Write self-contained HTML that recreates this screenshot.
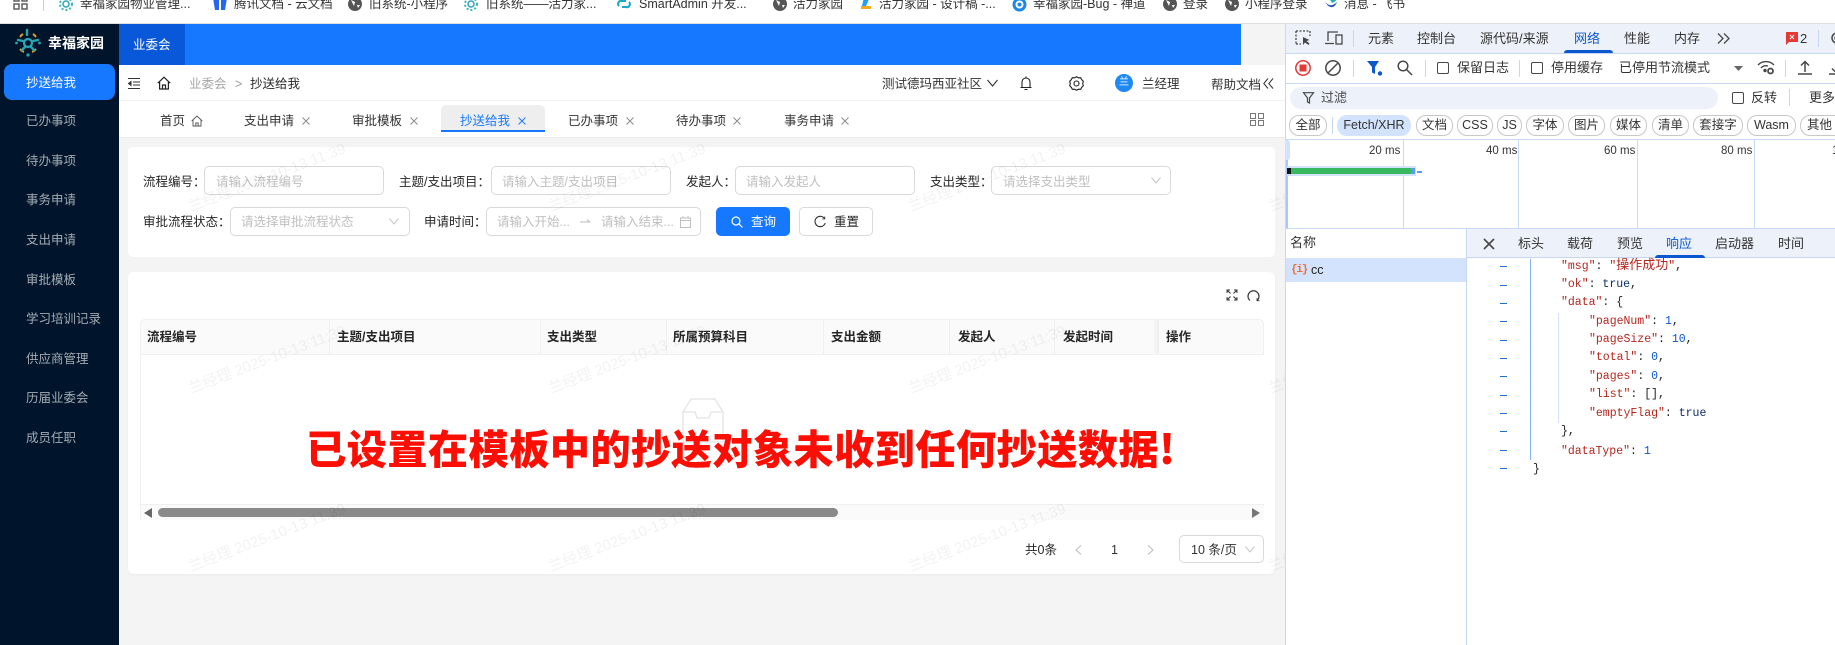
<!DOCTYPE html>
<html lang="zh-CN"><head><meta charset="utf-8"><title>抄送给我</title>
<style>
*{box-sizing:border-box}
html,body{margin:0;padding:0;width:1835px;height:645px;overflow:hidden;background:#fff;font-family:"Liberation Sans","Noto Sans CJK SC",sans-serif;font-size:12.5px;color:#262626}
.a{position:absolute}
.t{position:absolute;white-space:nowrap;line-height:20px;font-size:12.5px}
svg{position:absolute;overflow:visible}
.nav{color:#a3abb3;left:26px}
.tab{color:#333}
.lab{color:#262626}
.inp{position:absolute;background:#fff;border:1px solid #d9d9d9;border-radius:5px;height:29px}
.ph{color:#bfbfbf}
.th{font-weight:700;color:#262626;top:327px;font-size:12.5px}
.col{position:absolute;top:320px;height:34px;width:1px;background:#f0f0f0}
.dt{color:#333;font-size:13px}
.chip{position:absolute;top:115px;height:21px;border:1px solid #c8c8c8;border-radius:10px;text-align:center;line-height:19px;font-size:12.5px;color:#333;background:#fff}
.wm{position:absolute;white-space:nowrap;font-size:15px;line-height:20px;height:20px;color:rgba(0,0,0,.05);transform-origin:0 100%;transform:rotate(-20.7deg)}
.j{position:absolute;white-space:pre;font-family:"Liberation Mono","Noto Sans CJK SC",monospace;font-size:11.5px;line-height:18px;color:#222}
.j .c{font-size:13px}
.k{color:#b3261e}.n{color:#0b57d0}.b{color:#0d2f6e}
.g{position:absolute;left:1500px;width:7px;height:1px;background:#1a6fd6}
.bk{position:absolute;top:-6px;color:#333;white-space:nowrap;line-height:20px;font-size:12.5px}
.tl{position:absolute;top:140px;width:1px;height:88px;background:#c9daf8}
.ms{position:absolute;top:141px;white-space:nowrap;line-height:20px;font-size:11.5px;color:#333}
</style></head><body>

<!-- bookmarks bar -->
<div class="a" style="left:0;top:0;width:1835px;height:24px;background:#fff;border-bottom:1px solid #dcdcdc;overflow:hidden">
<svg style="left:13px;top:-5px" width="15" height="16" fill="none" stroke="#555" stroke-width="1.4"><rect x="1" y="1" width="5" height="5"/><rect x="9" y="1" width="5" height="5"/><rect x="1" y="9" width="5" height="5"/><rect x="9" y="9" width="5" height="5"/></svg>
<div class="a" style="left:43px;top:0;width:1px;height:11px;background:#ccd"></div>
<svg style="left:59px;top:-3px" width="14" height="14"><circle cx="7" cy="7" r="3" fill="none" stroke="#2aa7b5" stroke-width="1.5"/><circle cx="7" cy="7" r="6" fill="none" stroke="#3fb3b8" stroke-width="2" stroke-dasharray="2 2"/></svg><span class="bk" style="left:80px">幸福家园物业管理...</span>
<svg style="left:212px;top:-3px" width="16" height="14"><path d="M1 1h6v12H3zM9 1h6l-2 12H9z" fill="#2468f2"/></svg><span class="bk" style="left:234px">腾讯文档 - 云文档</span>
<svg style="left:348px;top:-3px" width="14" height="14"><circle cx="7" cy="7" r="7" fill="#555"/><path d="M3 3l4 2-1 4zM9 8l3 0-2 3z" fill="#fff"/></svg><span class="bk" style="left:369px">旧系统-小程序</span>
<svg style="left:464px;top:-3px" width="14" height="14"><circle cx="7" cy="7" r="3" fill="none" stroke="#2aa7b5" stroke-width="1.5"/><circle cx="7" cy="7" r="6" fill="none" stroke="#3fb3b8" stroke-width="2" stroke-dasharray="2 2"/></svg><span class="bk" style="left:486px">旧系统——活力家...</span>
<svg style="left:617px;top:-3px" width="14" height="14" fill="none" stroke="#1ea7c5" stroke-width="2"><path d="M2 9a3 3 0 0 1 3-5h4M12 5a3 3 0 0 1-3 5H5"/></svg><span class="bk" style="left:639px">SmartAdmin 开发...</span>
<svg style="left:773px;top:-3px" width="14" height="14"><circle cx="7" cy="7" r="7" fill="#555"/><path d="M3 3l4 2-1 4zM9 8l3 0-2 3z" fill="#fff"/></svg><span class="bk" style="left:793px">活力家园</span>
<svg style="left:859px;top:-3px" width="14" height="14"><path d="M2 9h10v3H2z" fill="#f5a623"/><path d="M5 0h6L7 9H3z" fill="#1ea0f2"/></svg><span class="bk" style="left:879px">活力家园 - 设计稿 -...</span>
<svg style="left:1012px;top:-3px" width="15" height="15"><circle cx="7.5" cy="7.5" r="7" fill="#1e88e5"/><circle cx="7.5" cy="7.5" r="3" fill="none" stroke="#fff" stroke-width="2"/></svg><span class="bk" style="left:1033px">幸福家园-Bug - 禅道</span>
<svg style="left:1163px;top:-3px" width="14" height="14"><circle cx="7" cy="7" r="7" fill="#555"/><path d="M3 3l4 2-1 4zM9 8l3 0-2 3z" fill="#fff"/></svg><span class="bk" style="left:1183px">登录</span>
<svg style="left:1225px;top:-3px" width="14" height="14"><circle cx="7" cy="7" r="7" fill="#555"/><path d="M3 3l4 2-1 4zM9 8l3 0-2 3z" fill="#fff"/></svg><span class="bk" style="left:1245px">小程序登录</span>
<svg style="left:1324px;top:-4px" width="14" height="14"><path d="M1 5c3 5 7 6 12 1-2 6-8 8-12-1z" fill="#1f4fb5"/><path d="M4 0h6l2 5-4 2z" fill="#1fb6a8"/></svg><span class="bk" style="left:1344px">消息 - 飞书</span>
</div>

<!-- main background -->
<div class="a" style="left:119px;top:24px;width:1166px;height:621px;background:#f4f4f4"></div>

<!-- sidebar -->
<div class="a" style="left:0;top:24px;width:119px;height:621px;background:#00152b"></div>
<svg style="left:14px;top:29px" width="28" height="28" fill="none">
<circle cx="14" cy="14" r="4" stroke="#2aa7b5" stroke-width="2.2"/>
<path d="M6 8a9 9 0 0 1 3-3M22 8a9 9 0 0 0-3-3" stroke="#e0a030" stroke-width="2"/>
<path d="M6 20a9 9 0 0 0 4 3M22 20a9 9 0 0 1-4 3" stroke="#e0a030" stroke-width="2"/>
<path d="M13 1v5M4 11l5 1M24 11l-5 1M8 21l3-3M20 21l-3-3" stroke="#24a6b3" stroke-width="2.4" stroke-linecap="round"/>
<circle cx="2.5" cy="14" r="1.4" fill="#24a6b3"/><circle cx="25.5" cy="14" r="1.4" fill="#24a6b3"/><circle cx="14" cy="26" r="1.6" fill="#24a6b3"/>
</svg>
<span class="t" style="left:48px;top:33px;color:#fff;font-weight:700;font-size:14px">幸福家园</span>
<div class="a" style="left:4px;top:64px;width:111px;height:36px;background:#1677ff;border-radius:8px"></div>
<span class="t" style="left:26px;top:73px;color:#fff">抄送给我</span>
<span class="t nav" style="top:111px">已办事项</span>
<span class="t nav" style="top:151px">待办事项</span>
<span class="t nav" style="top:190px">事务申请</span>
<span class="t nav" style="top:230px">支出申请</span>
<span class="t nav" style="top:270px">审批模板</span>
<span class="t nav" style="top:309px">学习培训记录</span>
<span class="t nav" style="top:349px">供应商管理</span>
<span class="t nav" style="top:388px">历届业委会</span>
<span class="t nav" style="top:428px">成员任职</span>

<!-- top blue bar -->
<div class="a" style="left:119px;top:24px;width:1122px;height:41px;background:#1677ff"></div>
<div class="a" style="left:119px;top:24px;width:66px;height:41px;background:#0958d9"></div>
<span class="t" style="left:133px;top:35px;color:#fff">业委会</span>

<!-- header row -->
<div class="a" style="left:119px;top:65px;width:1166px;height:36px;background:#fff;border-bottom:1px solid #f0f0f0"></div>
<svg style="left:128px;top:78px" width="13" height="11" fill="none" stroke="#333" stroke-width="1"><path d="M0 .5h12M5 4h7M5 7h7M0 10.5h12"/><path d="M3 3.5L.5 5.5 3 7.5z" fill="#333"/></svg>
<svg style="left:157px;top:76px" width="14" height="14" fill="none" stroke="#222" stroke-width="1.2"><path d="M.8 7.2L7 1.2l6.2 6M2.6 6v7h8.8V6M5.5 13V9h3v4"/></svg>
<span class="t" style="left:189px;top:74px;color:#a6a6a6">业委会</span>
<span class="t" style="left:235px;top:74px;color:#999">&gt;</span>
<span class="t" style="left:250px;top:74px;color:#262626">抄送给我</span>
<span class="t" style="left:882px;top:74px;color:#333">测试德玛西亚社区</span>
<svg style="left:987px;top:79px" width="11" height="8" fill="none" stroke="#333" stroke-width="1.1"><path d="M.5 1l5 6 5-6"/></svg>
<svg style="left:1020px;top:76px" width="12" height="15" fill="none" stroke="#222" stroke-width="1.1"><path d="M2 11V6a4 4 0 0 1 8 0v5M.5 11.5h11M6 .5v1.5M4.5 13.5h3"/></svg>
<svg style="left:1069px;top:76px" width="15" height="15" fill="none" stroke="#222" stroke-width="1.1"><path d="M7.5.8l2 1 2.2-.1 1 2 1.6 1.6-.6 2.2.6 2.2-1.6 1.6-1 2-2.2-.1-2 1-2-1-2.2.1-1-2L.7 9.7l.6-2.2-.6-2.2 1.6-1.6 1-2 2.200.1z"/><circle cx="7.500" cy="7.500" r="2.500"/></svg>
<div class="a" style="left:1115px;top:74px;width:18px;height:18px;border-radius:50%;background:#1e88f5;color:#fff;font-size:10px;line-height:18px;text-align:center">兰</div>
<span class="t" style="left:1142px;top:74px;color:#333">兰经理</span>
<span class="t" style="left:1211px;top:75px;color:#333">帮助文档</span>
<svg style="left:1263px;top:78px" width="11" height="11" fill="none" stroke="#333" stroke-width="1"><path d="M5 .5L.8 5.500 5 10.500M10 .5L5.800 5.500 10 10.500"/></svg>

<!-- tabs row -->
<div class="a" style="left:119px;top:101px;width:1166px;height:37px;background:#fff;border-bottom:1px solid #ebebeb"></div>
<div class="a" style="left:441px;top:105px;width:104px;height:27px;background:#eeeeee;border-radius:5px 5px 0 0;border-bottom:2px solid #1677ff"></div>
<span class="t tab" style="left:160px;top:111px">首页</span>
<svg style="left:191px;top:115px" width="12" height="12" fill="none" stroke="#555" stroke-width=".9"><path d="M.7 6L6 1l5.300 5M2 5v6h8V5M4.800 11V8h2.400v3"/></svg>
<span class="t tab" style="left:244px;top:111px">支出申请</span>
<svg style="left:302px;top:117px" width="8" height="8" stroke="#888" stroke-width=".9"><path d="M.5.5l7 7M7.500.5l-7 7"/></svg>
<span class="t tab" style="left:352px;top:111px">审批模板</span>
<svg style="left:410px;top:117px" width="8" height="8" stroke="#888" stroke-width=".9"><path d="M.5.5l7 7M7.500.5l-7 7"/></svg>
<span class="t" style="left:460px;top:111px;color:#1677ff">抄送给我</span>
<svg style="left:518px;top:117px" width="8" height="8" stroke="#1677ff" stroke-width=".9"><path d="M.5.5l7 7M7.500.5l-7 7"/></svg>
<span class="t tab" style="left:568px;top:111px">已办事项</span>
<svg style="left:626px;top:117px" width="8" height="8" stroke="#888" stroke-width=".9"><path d="M.5.5l7 7M7.500.5l-7 7"/></svg>
<span class="t tab" style="left:676px;top:111px">待办事项</span>
<svg style="left:733px;top:117px" width="8" height="8" stroke="#888" stroke-width=".9"><path d="M.5.5l7 7M7.500.5l-7 7"/></svg>
<span class="t tab" style="left:784px;top:111px">事务申请</span>
<svg style="left:841px;top:117px" width="8" height="8" stroke="#888" stroke-width=".9"><path d="M.5.5l7 7M7.500.5l-7 7"/></svg>
<svg style="left:1250px;top:113px" width="14" height="13" fill="none" stroke="#777" stroke-width="1"><rect x=".5" y=".5" width="5" height="5"/><rect x="8.500" y=".5" width="5" height="5"/><rect x=".5" y="7.500" width="5" height="5"/><rect x="8.500" y="7.500" width="5" height="5"/></svg>

<!-- filter card -->
<div class="a" style="left:128px;top:147px;width:1147px;height:110px;background:#fff;border-radius:5px"></div>
<span class="t lab" style="left:143px;top:172px">流程编号：</span>
<div class="inp" style="left:204px;top:166px;width:180px"></div><span class="t ph" style="left:216px;top:172px">请输入流程编号</span>
<span class="t lab" style="left:399px;top:172px">主题/支出项目：</span>
<div class="inp" style="left:491px;top:166px;width:180px"></div><span class="t ph" style="left:502px;top:172px">请输入主题/支出项目</span>
<span class="t lab" style="left:686px;top:172px">发起人：</span>
<div class="inp" style="left:735px;top:166px;width:180px"></div><span class="t ph" style="left:746px;top:172px">请输入发起人</span>
<span class="t lab" style="left:930px;top:172px">支出类型：</span>
<div class="inp" style="left:991px;top:166px;width:180px"></div><span class="t ph" style="left:1003px;top:172px">请选择支出类型</span>
<svg style="left:1151px;top:177px" width="10" height="7" fill="none" stroke="#c4c4c4"><path d="M.5.5L5 6 9.500.5"/></svg>
<span class="t lab" style="left:143px;top:212px">审批流程状态：</span>
<div class="inp" style="left:230px;top:207px;width:180px"></div><span class="t ph" style="left:241px;top:212px">请选择审批流程状态</span>
<svg style="left:389px;top:218px" width="10" height="7" fill="none" stroke="#c4c4c4"><path d="M.5.5L5 6 9.500.5"/></svg>
<span class="t lab" style="left:424px;top:212px">申请时间：</span>
<div class="inp" style="left:486px;top:207px;width:215px"></div>
<span class="t ph" style="left:497px;top:212px">请输入开始...</span>
<svg style="left:580px;top:219px" width="11" height="6" fill="none" stroke="#bbb"><path d="M0 3h10M7 .5L10 3"/></svg>
<span class="t ph" style="left:601px;top:212px">请输入结束...</span>
<svg style="left:680px;top:216px" width="11" height="12" fill="none" stroke="#bfbfbf"><rect x=".5" y="2" width="10" height="9.500"/><path d="M.5 4.500h10M3 0v2M8 0v2"/></svg>
<div class="a" style="left:716px;top:207px;width:74px;height:29px;background:#1677ff;border-radius:5px"></div>
<svg style="left:731px;top:216px" width="12" height="12" fill="none" stroke="#fff" stroke-width="1.200"><circle cx="5" cy="5" r="4"/><path d="M8 8l3.500 3.500"/></svg>
<span class="t" style="left:751px;top:212px;color:#fff">查询</span>
<div class="a" style="left:799px;top:207px;width:74px;height:29px;background:#fff;border:1px solid #d9d9d9;border-radius:5px"></div>
<svg style="left:814px;top:216px" width="12" height="12" fill="none" stroke="#333" stroke-width="1.100"><path d="M10.500 2.500A5.200 5.200 0 1 0 11.200 7"/><path d="M10.800 .5v2.500H8.300" stroke-width=".8"/></svg>
<span class="t" style="left:834px;top:212px;color:#262626">重置</span>

<!-- table card -->
<div class="a" style="left:128px;top:272px;width:1147px;height:302px;background:#fff;border-radius:6px;box-shadow:0 1px 2px rgba(0,0,0,.04)"></div>
<svg style="left:1226px;top:289px" width="12" height="12" fill="none" stroke="#333" stroke-width="1"><path d="M1 4V1h3M8 1h3v3M11 8v3H8M4 11H1V8M1.500 1.500l3 3M10.500 1.500l-3 3M10.500 10.500l-3-3M1.500 10.500l3-3"/></svg>
<svg style="left:1247px;top:289px" width="13" height="13" fill="none" stroke="#333" stroke-width="1.200"><path d="M3 11.500A5.500 5.500 0 1 1 10 11.500"/><path d="M10 9v2.700h2.500" stroke-width=".8"/></svg>
<div class="a" style="left:140px;top:319px;width:1124px;height:36px;background:#fafafa;border:1px solid #f0f0f0;border-radius:5px 5px 0 0"></div>
<i class="col" style="left:329px"></i><i class="col" style="left:540px"></i><i class="col" style="left:666px"></i><i class="col" style="left:823px"></i><i class="col" style="left:949px"></i><i class="col" style="left:1054px"></i>
<div class="a" style="left:1153px;top:320px;width:6px;height:34px;background:linear-gradient(90deg,rgba(0,0,0,0),rgba(0,0,0,.05))"></div>
<span class="t th" style="left:147px">流程编号</span>
<span class="t th" style="left:337px">主题/支出项目</span>
<span class="t th" style="left:547px">支出类型</span>
<span class="t th" style="left:673px">所属预算科目</span>
<span class="t th" style="left:831px">支出金额</span>
<span class="t th" style="left:958px">发起人</span>
<span class="t th" style="left:1063px">发起时间</span>
<span class="t th" style="left:1166px">操作</span>
<div class="a" style="left:140px;top:355px;width:1px;height:165px;background:#f0f0f0"></div>
<svg style="left:682px;top:398px" width="42" height="50" fill="none" stroke="#e4e4e4" stroke-width="1.300"><path d="M1 14L9 1h24l8 13v30H1zM1 14h12l2 6h12l2-6h12"/></svg>
<div class="a" style="left:141px;top:504px;width:1123px;height:16px;background:#fafafa;border-top:1px solid #f0f0f0"></div>
<svg style="left:144px;top:508px" width="8" height="10"><path d="M8 0v10L0 5z" fill="#666"/></svg>
<div class="a" style="left:158px;top:508px;width:680px;height:9px;background:#8a8a8a;border-radius:5px"></div>
<svg style="left:1252px;top:508px" width="8" height="10"><path d="M0 0v10l8-5z" fill="#777"/></svg>
<span class="t" style="left:1025px;top:540px;color:#262626">共0条</span>
<svg style="left:1075px;top:545px" width="7" height="10" fill="none" stroke="#bbb"><path d="M6 .5L1 5l5 4.500"/></svg>
<span class="t" style="left:1111px;top:540px;color:#333">1</span>
<svg style="left:1147px;top:545px" width="7" height="10" fill="none" stroke="#bbb"><path d="M1 .5L6 5 1 9.500"/></svg>
<div class="inp" style="left:1179px;top:535px;width:85px;height:28px"></div>
<span class="t" style="left:1191px;top:540px;color:#333">10 条/页</span>
<svg style="left:1245px;top:546px" width="10" height="7" fill="none" stroke="#c4c4c4"><path d="M.5.5L5 6 9.500.5"/></svg>

<!-- watermarks -->
<div class="a" style="left:119px;top:65px;width:1166px;height:580px;overflow:hidden;pointer-events:none">
<div class="wm" style="left:74px;top:132px">兰经理 2025-10-13 11:39</div>
<div class="wm" style="left:434px;top:132px">兰经理 2025-10-13 11:39</div>
<div class="wm" style="left:794px;top:132px">兰经理 2025-10-13 11:39</div>
<div class="wm" style="left:1154px;top:132px">兰经理 2025-10-13 11:39</div>
<div class="wm" style="left:74px;top:314px">兰经理 2025-10-13 11:39</div>
<div class="wm" style="left:434px;top:314px">兰经理 2025-10-13 11:39</div>
<div class="wm" style="left:794px;top:314px">兰经理 2025-10-13 11:39</div>
<div class="wm" style="left:1154px;top:314px">兰经理 2025-10-13 11:39</div>
<div class="wm" style="left:74px;top:492px">兰经理 2025-10-13 11:39</div>
<div class="wm" style="left:434px;top:492px">兰经理 2025-10-13 11:39</div>
<div class="wm" style="left:794px;top:492px">兰经理 2025-10-13 11:39</div>
<div class="wm" style="left:1154px;top:492px">兰经理 2025-10-13 11:39</div>
</div>

<!-- big red text -->
<div class="a" style="left:306px;top:417px;white-space:nowrap;font-size:40.3px;letter-spacing:.32px;line-height:60px;font-weight:900;color:#fb0f05;font-family:'Noto Sans CJK SC',sans-serif">已设置在模板中的抄送对象未收到任何抄送数据!</div>

<!-- devtools -->
<div class="a" style="left:1285px;top:24px;width:550px;height:621px;background:#fff;border-left:1px solid #c9d7f2"></div>
<div class="a" style="left:1286px;top:24px;width:549px;height:30px;background:#edf2fa;border-bottom:1px solid #c7d7f0"></div>
<svg style="left:1295px;top:30px" width="17" height="16" fill="none" stroke="#474747" stroke-width="1.300"><path d="M1 1h14M1 1v13M1 14h5M15 1v5" stroke-dasharray="2 1.500"/><path d="M8 7v8l2-2.500 3.500 2.500 1-1.500-3-2.500 3-1z" fill="#474747" stroke="none"/></svg>
<svg style="left:1325px;top:31px" width="18" height="14" fill="none" stroke="#474747" stroke-width="1.300"><path d="M3 10V1h10M0 12.500h9"/><rect x="11" y="4" width="6" height="9"/></svg>
<div class="a" style="left:1353px;top:30px;width:1px;height:17px;background:#c7d7f0"></div>
<span class="t dt" style="left:1368px;top:29px">元素</span>
<span class="t dt" style="left:1417px;top:29px">控制台</span>
<span class="t dt" style="left:1480px;top:29px">源代码/来源</span>
<span class="t dt" style="left:1574px;top:29px;color:#0b57d0">网络</span>
<div class="a" style="left:1564px;top:50px;width:49px;height:3px;background:#0b57d0;border-radius:3px 3px 0 0"></div>
<span class="t dt" style="left:1624px;top:29px">性能</span>
<span class="t dt" style="left:1674px;top:29px">内存</span>
<svg style="left:1717px;top:33px" width="13" height="11" fill="none" stroke="#474747" stroke-width="1.300"><path d="M1 .5l5 5-5 5M7 .5l5 5-5 5"/></svg>
<svg style="left:1786px;top:32px" width="12" height="13"><path d="M0 0h12v10H3l-3 3z" fill="#e53935"/><path d="M4 3l4 4M8 3L4 7" stroke="#fff" stroke-width="1"/></svg>
<span class="t dt" style="left:1800px;top:29px">2</span>
<div class="a" style="left:1818px;top:30px;width:1px;height:17px;background:#c7d7f0"></div>
<svg style="left:1830px;top:31px" width="14" height="14" fill="none" stroke="#474747" stroke-width="1.500"><circle cx="7" cy="7" r="5"/><circle cx="7" cy="7" r="2"/></svg>

<div class="a" style="left:1286px;top:83px;width:549px;height:1px;background:#c7d7f0"></div>
<svg style="left:1295px;top:60px" width="16" height="16"><circle cx="8" cy="8" r="7.200" fill="none" stroke="#e53935" stroke-width="1.500"/><rect x="4.500" y="4.500" width="7" height="7" fill="#e53935"/></svg>
<svg style="left:1325px;top:60px" width="16" height="16" fill="none" stroke="#474747" stroke-width="1.500"><circle cx="8" cy="8" r="7.200"/><path d="M3 13L13 3"/></svg>
<div class="a" style="left:1353px;top:60px;width:1px;height:17px;background:#c7d7f0"></div>
<svg style="left:1367px;top:60px" width="16" height="16"><path d="M0 1h12L8 7v7L5 12.500V7z" fill="#0b57d0"/><circle cx="13" cy="13.500" r="2.200" fill="#0b57d0"/></svg>
<svg style="left:1397px;top:60px" width="16" height="16" fill="none" stroke="#474747" stroke-width="1.500"><circle cx="6" cy="6" r="4.800"/><path d="M9.500 9.500l5.500 5.500"/></svg>
<div class="a" style="left:1425px;top:60px;width:1px;height:17px;background:#c7d7f0"></div>
<div class="a" style="left:1437px;top:62px;width:12px;height:12px;border:1px solid #474747;border-radius:2px"></div>
<span class="t dt" style="left:1457px;top:58px">保留日志</span>
<div class="a" style="left:1519px;top:60px;width:1px;height:17px;background:#c7d7f0"></div>
<div class="a" style="left:1531px;top:62px;width:12px;height:12px;border:1px solid #474747;border-radius:2px"></div>
<span class="t dt" style="left:1551px;top:58px">停用缓存</span>
<span class="t dt" style="left:1619px;top:58px">已停用节流模式</span>
<svg style="left:1734px;top:66px" width="9" height="5"><path d="M0 0h9L4.500 5z" fill="#666"/></svg>
<svg style="left:1757px;top:60px" width="18" height="15" fill="none" stroke="#474747" stroke-width="1.400"><path d="M1 5a11 11 0 0 1 16 0M4 8a7 7 0 0 1 7-2"/><circle cx="8" cy="10.500" r="1" fill="#474747"/><circle cx="13.500" cy="11" r="2.500" stroke-width="1.800"/></svg>
<div class="a" style="left:1785px;top:60px;width:1px;height:17px;background:#c7d7f0"></div>
<svg style="left:1798px;top:60px" width="14" height="15" fill="none" stroke="#474747" stroke-width="1.500"><path d="M7 12V2M3 5.500L7 1.500l4 4M0 14h14"/></svg>
<svg style="left:1829px;top:60px" width="14" height="15" fill="none" stroke="#474747" stroke-width="1.500"><path d="M7 2v10M3 8.500l4 4 4-4M0 14h14"/></svg>

<div class="a" style="left:1290px;top:87px;width:428px;height:22px;border-radius:11px;background:#edf2fa"></div>
<svg style="left:1303px;top:92px" width="11" height="12" fill="none" stroke="#474747" stroke-width="1.200"><path d="M.5.7h10L6.500 6v5L4.500 10V6z"/></svg>
<span class="t dt" style="left:1321px;top:88px;color:#474747">过滤</span>
<div class="a" style="left:1732px;top:92px;width:12px;height:12px;border:1px solid #474747;border-radius:2px"></div>
<span class="t dt" style="left:1751px;top:88px">反转</span>
<div class="a" style="left:1789px;top:89px;width:1px;height:17px;background:#c7d7f0"></div>
<span class="t dt" style="left:1809px;top:88px">更多</span>

<div class="chip" style="left:1289px;width:38px">全部</div>
<div class="a" style="left:1332px;top:117px;width:1px;height:17px;background:#c7d7f0"></div>
<div class="chip" style="left:1337px;width:74px;background:#d3e3fd;border-color:#d3e3fd">Fetch/XHR</div>
<div class="chip" style="left:1416px;width:37px">文档</div>
<div class="chip" style="left:1457px;width:36px">CSS</div>
<div class="chip" style="left:1497px;width:25px">JS</div>
<div class="chip" style="left:1526px;width:38px">字体</div>
<div class="chip" style="left:1568px;width:37px">图片</div>
<div class="chip" style="left:1610px;width:37px">媒体</div>
<div class="chip" style="left:1652px;width:37px">清单</div>
<div class="chip" style="left:1693px;width:50px">套接字</div>
<div class="chip" style="left:1747px;width:49px">Wasm</div>
<div class="chip" style="left:1800px;width:50px;text-align:left;padding-left:6px">其他</div>

<div class="a" style="left:1286px;top:139px;width:549px;height:1px;background:#c9daf8"></div>
<div class="a" style="left:1286px;top:228px;width:549px;height:1px;background:#c9daf8"></div>
<div class="a" style="left:1286px;top:140px;width:2px;height:88px;background:#a8c7fa"></div>
<div class="a" style="left:1285px;top:140px;width:5px;height:20px;background:#d3e3fd;border-radius:0 3px 3px 0"></div>
<i class="tl" style="left:1403px"></i><i class="tl" style="left:1518px"></i><i class="tl" style="left:1637px"></i><i class="tl" style="left:1754px"></i>
<span class="ms" style="left:1369px">20 ms</span>
<span class="ms" style="left:1486px">40 ms</span>
<span class="ms" style="left:1604px">60 ms</span>
<span class="ms" style="left:1721px">80 ms</span>
<span class="ms" style="left:1832px">1</span>
<div class="a" style="left:1287px;top:166px;width:129px;height:10px;background:#d3e3fd"></div>
<div class="a" style="left:1287px;top:168px;width:4px;height:6px;background:#111"></div>
<div class="a" style="left:1291px;top:168px;width:120px;height:6px;background:#38b860"></div>
<div class="a" style="left:1411px;top:168px;width:4px;height:6px;background:#5a9bf0"></div>
<div class="a" style="left:1417px;top:171px;width:5px;height:2px;background:#5a9bf0"></div>

<!-- lower split -->
<span class="t dt" style="left:1290px;top:233px">名称</span>
<div class="a" style="left:1286px;top:258px;width:180px;height:24px;background:#d3e3fd"></div>
<span class="t" style="left:1291px;top:260px;color:#e8703a;font-weight:700;font-size:11px;letter-spacing:-1.2px;font-family:'Liberation Mono',monospace">{i}</span>
<span class="t" style="left:1311px;top:260px;color:#222">cc</span>
<div class="a" style="left:1466px;top:229px;width:369px;height:29px;background:#edf2fa;border-bottom:1px solid #c7d7f0"></div>
<div class="a" style="left:1466px;top:229px;width:1px;height:416px;background:#c7d7f0"></div>
<svg style="left:1483px;top:238px" width="12" height="12" stroke="#474747" stroke-width="1.600"><path d="M1 1l10 10M11 1L1 11"/></svg>
<span class="t dt" style="left:1518px;top:234px">标头</span>
<span class="t dt" style="left:1567px;top:234px">载荷</span>
<span class="t dt" style="left:1617px;top:234px">预览</span>
<span class="t dt" style="left:1666px;top:234px;color:#0b57d0">响应</span>
<div class="a" style="left:1655px;top:255px;width:50px;height:3px;background:#0b57d0;border-radius:3px 3px 0 0"></div>
<span class="t dt" style="left:1715px;top:234px">启动器</span>
<span class="t dt" style="left:1778px;top:234px">时间</span>

<!-- JSON -->
<div class="a" style="left:1530px;top:259px;width:1px;height:201px;background:#8ab4f8"></div>
<div class="a" style="left:1558px;top:313px;width:1px;height:110px;background:#d3e3fd"></div>
<i class="g" style="top:266px"></i><i class="g" style="top:285px"></i><i class="g" style="top:303px"></i><i class="g" style="top:321px"></i><i class="g" style="top:340px"></i><i class="g" style="top:358px"></i><i class="g" style="top:376px"></i><i class="g" style="top:395px"></i><i class="g" style="top:413px"></i><i class="g" style="top:431px"></i><i class="g" style="top:450px"></i><i class="g" style="top:468px"></i>
<div class="j" style="left:1561px;top:257px"><span class="k">"msg"</span>: <span class="k">"<span class="c">操作成功</span>"</span>,</div>
<div class="j" style="left:1561px;top:276px"><span class="k">"ok"</span>: <span class="b">true</span>,</div>
<div class="j" style="left:1561px;top:294px"><span class="k">"data"</span>: {</div>
<div class="j" style="left:1589px;top:313px"><span class="k">"pageNum"</span>: <span class="n">1</span>,</div>
<div class="j" style="left:1589px;top:331px"><span class="k">"pageSize"</span>: <span class="n">10</span>,</div>
<div class="j" style="left:1589px;top:349px"><span class="k">"total"</span>: <span class="n">0</span>,</div>
<div class="j" style="left:1589px;top:368px"><span class="k">"pages"</span>: <span class="n">0</span>,</div>
<div class="j" style="left:1589px;top:386px"><span class="k">"list"</span>: [],</div>
<div class="j" style="left:1589px;top:405px"><span class="k">"emptyFlag"</span>: <span class="b">true</span></div>
<div class="j" style="left:1561px;top:423px">},</div>
<div class="j" style="left:1561px;top:443px"><span class="k">"dataType"</span>: <span class="n">1</span></div>
<div class="j" style="left:1533px;top:461px">}</div>

</body></html>
